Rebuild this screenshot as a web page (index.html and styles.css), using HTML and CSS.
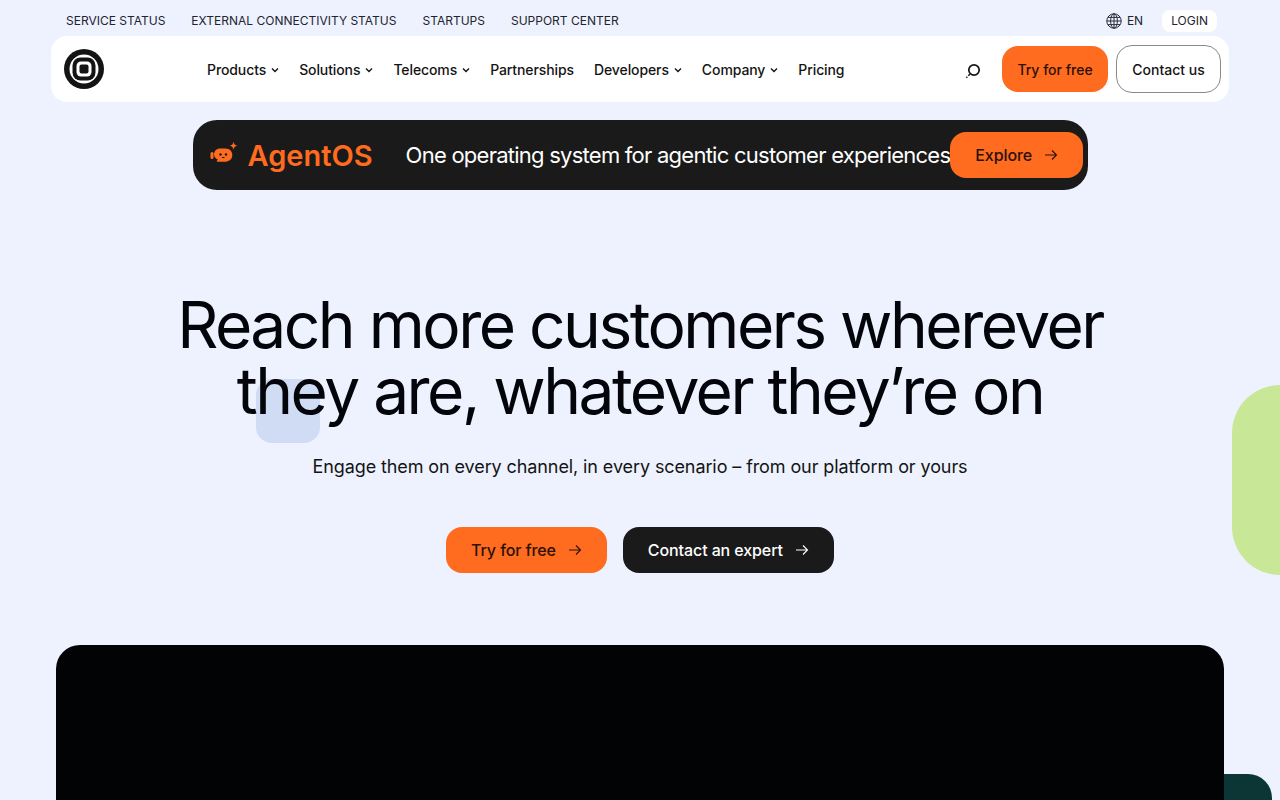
FILE: index.html
```html
<!DOCTYPE html>
<html lang="en">
<head>
    <meta charset="UTF-8">
    <title>Reach more customers wherever they are</title>
    <link rel="stylesheet" href="styles.css">
</head>
<body>
    <div class="page">
        <div class="shape shape-blue"></div>
        <div class="shape shape-green"></div>
        <div class="shape shape-teal"></div>

        <div class="topbar">
            <div class="topbar-links">
                <a href="#">SERVICE STATUS</a>
                <a href="#">EXTERNAL CONNECTIVITY STATUS</a>
                <a href="#">STARTUPS</a>
                <a href="#">SUPPORT CENTER</a>
            </div>
            <div class="topbar-right">
                <a class="lang" href="#">
                    <svg width="16" height="16" viewBox="0 0 16 16" fill="none" stroke="#2b2f3a" stroke-width="1">
                        <circle cx="8" cy="8" r="7.2"/>
                        <ellipse cx="8" cy="8" rx="3.4" ry="7.2"/>
                        <path d="M8 .8v14.4M.8 8h14.4M1.8 4.4h12.4M1.8 11.6h12.4"/>
                    </svg>
                    EN
                </a>
                <a class="login" href="#">LOGIN</a>
            </div>
        </div>

        <header class="navbar">
            <a class="logo" href="#">
                <svg width="40" height="40" viewBox="0 0 40 40">
                    <circle cx="20" cy="20" r="20" fill="#141414"/>
                    <circle cx="20" cy="20" r="14.5" fill="#fff"/>
                    <rect x="8.5" y="8.5" width="23" height="23" rx="8" fill="#141414"/>
                    <rect x="12.5" y="12.5" width="15" height="15" rx="4.5" fill="#fff"/>
                    <rect x="15.5" y="15.5" width="9" height="9" rx="2" fill="#141414"/>
                </svg>
            </a>
            <nav class="nav-links">
                <a href="#">Products <svg class="chev" width="8" height="6" viewBox="0 0 8 6"><path d="M1 1.5l3 3 3-3" fill="none" stroke="#141414" stroke-width="1.4"/></svg></a>
                <a href="#">Solutions <svg class="chev" width="8" height="6" viewBox="0 0 8 6"><path d="M1 1.5l3 3 3-3" fill="none" stroke="#141414" stroke-width="1.4"/></svg></a>
                <a href="#">Telecoms <svg class="chev" width="8" height="6" viewBox="0 0 8 6"><path d="M1 1.5l3 3 3-3" fill="none" stroke="#141414" stroke-width="1.4"/></svg></a>
                <a href="#">Partnerships</a>
                <a href="#">Developers <svg class="chev" width="8" height="6" viewBox="0 0 8 6"><path d="M1 1.5l3 3 3-3" fill="none" stroke="#141414" stroke-width="1.4"/></svg></a>
                <a href="#">Company <svg class="chev" width="8" height="6" viewBox="0 0 8 6"><path d="M1 1.5l3 3 3-3" fill="none" stroke="#141414" stroke-width="1.4"/></svg></a>
                <a href="#">Pricing</a>
            </nav>
            <div class="nav-actions">
                <svg class="search" width="18" height="18" viewBox="0 0 18 18" fill="none" stroke="#141414">
                    <circle cx="10" cy="8" r="5.2" stroke-width="1.7"/>
                    <path d="M5.8 12.2L2.4 15.8" stroke-width="1.5" stroke-dasharray="2.2 1.4"/>
                </svg>
                <a class="btn-nav btn-orange" href="#">Try for free</a>
                <a class="btn-nav btn-outline" href="#">Contact us</a>
            </div>
        </header>

        <div class="promo">
            <div class="promo-brand">
                <svg width="30" height="30" viewBox="0 0 30 30">
                    <path fill="#ff6b1f" d="M11 8.5h5.5c4 0 6.8 2.8 6.8 6.6 0 3.9-2.8 6.6-6.8 6.6H8.5c-.7 0-1-.6-.5-1.1l.9-1C6.600 18.600 5 17 5 14.800 5 11.100 7.500 8.500 11 8.500z"/>
                    <rect x="1.500" y="12" width="3" height="7" rx="1.500" fill="#ff6b1f"/>
                    <path fill="#ff6b1f" d="M24.500 1.500c.4 2.800 1.200 3.700 4 4.200-2.800.5-3.600 1.400-4 4.200-.4-2.800-1.200-3.700-4-4.200 2.800-.5 3.600-1.400 4-4.200z"/>
                    <circle cx="11.500" cy="14.500" r="1.200" fill="#1a1a1a"/>
                    <circle cx="17" cy="14.500" r="1.200" fill="#1a1a1a"/>
                    <path d="M13 17.500h2.500" stroke="#1a1a1a" stroke-width="1"/>
                </svg>
                <span class="promo-name">AgentOS</span>
            </div>
            <div class="promo-divider"></div>
            <p class="promo-text">One operating system for agentic customer experiences</p>
            <a class="btn btn-orange promo-btn" href="#">Explore
                <svg class="arrow" width="14" height="12" viewBox="0 0 14 12" fill="none" stroke="currentColor" stroke-width="1.100"><path d="M1 6h11.500M8 1.500L12.500 6 8 10.500"/></svg>
            </a>
        </div>

        <section class="hero">
            <h1>Reach more customers wherever they are, whatever they’re on</h1>
            <p class="hero-sub">Engage them on every channel, in every scenario – from our platform or yours</p>
            <div class="hero-actions">
                <a class="btn btn-orange" href="#">Try for free
                    <svg class="arrow" width="14" height="12" viewBox="0 0 14 12" fill="none" stroke="currentColor" stroke-width="1.100"><path d="M1 6h11.500M8 1.500L12.500 6 8 10.500"/></svg>
                </a>
                <a class="btn btn-dark" href="#">Contact an expert
                    <svg class="arrow" width="14" height="12" viewBox="0 0 14 12" fill="none" stroke="currentColor" stroke-width="1.100"><path d="M1 6h11.500M8 1.500L12.500 6 8 10.500"/></svg>
                </a>
            </div>
        </section>

        <div class="showcase"></div>
    </div>
</body>
</html>
```

FILE: styles.css
```css
html,
body {
    margin: 0;
    height: 800px;
    overflow: hidden;
}

body {
    background: #edf2fe;
    color: #141414;
    font-family: Inter, "Noto Sans", sans-serif;
}

a {
    color: inherit;
    text-decoration: none;
}

.page {
    position: relative;
    height: 800px;
    overflow: hidden;
}

/* Decorative shapes */
.shape {
    position: absolute;
}

.shape-blue {
    left: 256px;
    top: 379px;
    width: 64px;
    height: 64px;
    border-radius: 16px;
    background: #cfdcf3;
}

.shape-green {
    left: 1232px;
    top: 385px;
    width: 96px;
    height: 190px;
    border-radius: 48px;
    background: #c8e797;
}

.shape-teal {
    left: 1176px;
    top: 774px;
    width: 96px;
    height: 96px;
    border-radius: 24px;
    background: #0b3635;
}

/* Top bar */
.topbar {
    position: relative;
    display: flex;
    justify-content: space-between;
    align-items: center;
    height: 36px;
    padding: 5px 63px 0 66px;
    box-sizing: border-box;
    font-size: 12px;
    color: #1f2430;
}

.topbar-links {
    display: flex;
    gap: 26px;
}

.topbar-right {
    display: flex;
    align-items: center;
    gap: 19px;
}

.lang {
    display: flex;
    align-items: center;
    gap: 5px;
}

.login {
    background: #fff;
    border-radius: 8px;
    padding: 3px 9px;
    line-height: 16px;
}

/* Main navigation */
.navbar {
    position: relative;
    display: flex;
    align-items: center;
    height: 66px;
    margin: 0 51px;
    padding: 0 8px 0 13px;
    background: #fff;
    border-radius: 16px;
}

.logo {
    display: flex;
    margin-right: 103px;
}

.nav-links {
    display: flex;
    gap: 20px;
    font-size: 14px;
    font-weight: 500;
    letter-spacing: -0.1px;
}

.nav-links a {
    display: flex;
    align-items: center;
    gap: 5px;
}

.chev {
    margin-top: 2px;
}

.nav-actions {
    display: flex;
    align-items: center;
    margin-left: auto;
}

.search {
    margin-right: 20px;
    margin-top: 4px;
}

.btn-nav {
    display: flex;
    align-items: center;
    justify-content: center;
    box-sizing: border-box;
    font-size: 14px;
    font-weight: 500;
    border-radius: 16px;
}

.nav-actions .btn-orange {
    width: 106px;
    height: 46px;
    margin-right: 8px;
}

.btn-outline {
    width: 105px;
    height: 48px;
    border: 1px solid #8a8a8a;
}

.btn-orange {
    background: #ff6b1f;
    color: #2a1208;
}

/* AgentOS banner */
.promo {
    position: relative;
    display: flex;
    align-items: center;
    box-sizing: border-box;
    width: 895px;
    height: 70px;
    margin: 18px auto 0;
    padding: 0 16px;
    background: #1a1a1a;
    border-radius: 24px;
}

.promo-brand {
    display: flex;
    align-items: center;
    gap: 9px;
}

.promo-name {
    font-size: 29px;
    font-weight: 600;
    color: #ff6b1f;
}

.promo-divider {
    width: 1px;
    height: 42px;
    margin: 0 15px 0 18px;
    background: #fff;
}

.promo-text {
    margin: 0;
    font-size: 22px;
    letter-spacing: -0.75px;
    color: #fff;
    white-space: nowrap;
}

.btn {
    display: inline-flex;
    align-items: center;
    gap: 12px;
    box-sizing: border-box;
    height: 46px;
    padding: 0 25px;
    font-size: 16px;
    font-weight: 500;
    letter-spacing: -0.1px;
    border-radius: 16px;
}

.promo-btn {
    margin-left: auto;
}

.btn-dark {
    background: #1a1a1a;
    color: #fff;
}

/* Hero */
.hero {
    position: relative;
    text-align: center;
}

.hero h1 {
    width: 960px;
    margin: 102px auto 0;
    font-size: 64px;
    font-weight: 400;
    line-height: 66px;
    letter-spacing: -2.5px;
    color: #03050a;
}

.hero-sub {
    margin: 30px 0 0;
    font-size: 18px;
    line-height: 26px;
    letter-spacing: -0.1px;
}

.hero-actions {
    display: flex;
    justify-content: center;
    gap: 16px;
    margin-top: 47px;
}

/* Dark panel at the bottom */
.showcase {
    position: relative;
    height: 300px;
    margin: 72px 56px 0;
    background: #010305;
    border-radius: 24px;
}
```
